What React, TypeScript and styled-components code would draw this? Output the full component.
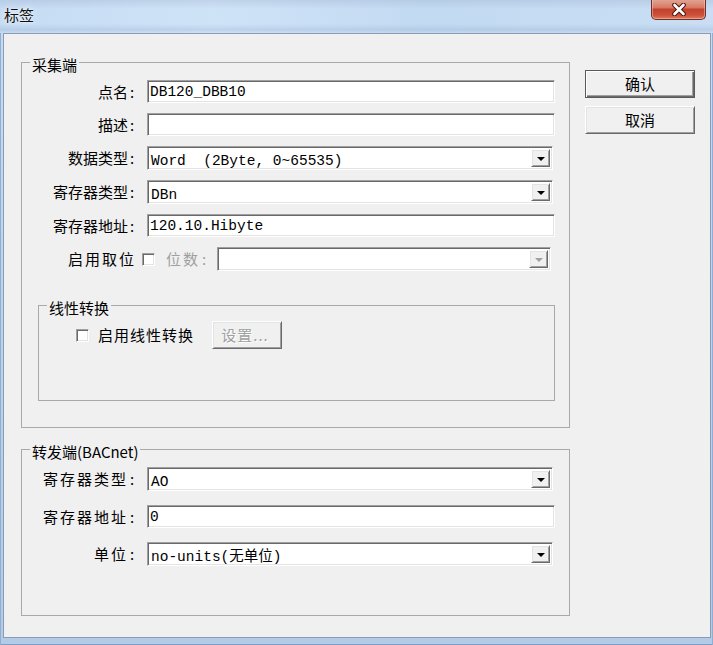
import React from "react";
import styled, { createGlobalStyle, css } from "styled-components";

const GlobalStyle = createGlobalStyle`
  html, body { margin: 0; padding: 0; background: #ffffff; }
  body { font-family: "Noto Sans CJK SC", "Noto Sans", sans-serif; color: #000; }
  * { box-sizing: border-box; }
`;

const Window = styled.div`
  width: 713px;
  height: 645px;
  display: flex;
  flex-direction: column;
  background: linear-gradient(to bottom, #c6dcf3 0%, #bdd5ee 40%, #b3cbe6 100%);
`;

const TitleBar = styled.div`
  height: 33px;
  flex: none;
  display: flex;
  justify-content: space-between;
  align-items: flex-start;
  padding: 0 5px 0 4px;
  background:
    linear-gradient(to bottom, rgba(150, 165, 195, 0.28) 0px, rgba(150, 165, 195, 0) 9px),
    linear-gradient(to bottom, rgba(255, 255, 255, 0) 24px, rgba(140, 160, 195, 0.25) 30px, rgba(255, 255, 255, 0) 33px),
    linear-gradient(to right, #c5dcf3 0%, #cfe3f7 30%, #c2daf2 60%, #c9def4 100%);
`;

const TitleText = styled.span`
  font-size: 15px;
  line-height: 18px;
  margin-top: 6px;
  color: #111;
  text-shadow: 0 0 6px rgba(255, 255, 255, 0.95), 0 0 2px rgba(255, 255, 255, 0.9);
`;

const CloseButton = styled.div`
  width: 55px;
  height: 21px;
  margin-top: -1px;
  margin-right: 2px;
  display: flex;
  align-items: center;
  justify-content: center;
  border: 1px solid #6d2f28;
  border-top: none;
  border-radius: 0 0 5px 5px;
  background: linear-gradient(to bottom, #e4a896 0%, #d77b66 42%, #c4412e 52%, #cc5038 80%, #df7a5c 100%);
  box-shadow: inset 0 0 0 1px rgba(255, 210, 200, 0.45);
`;

const FrameBody = styled.div`
  flex: 1;
  display: flex;
  padding: 0 3px 7px 3px;
  box-shadow: inset 1px 0 0 #8eaed3, inset -1px 0 0 #8eaed3, inset 0 -1px 0 #7d9ec6;
`;

const Client = styled.div`
  flex: 1;
  display: flex;
  gap: 15px;
  padding: 16px 15px 0 17px;
  background: #f0f0f0;
  border: 1px solid #8a9cb2;
`;

const LeftColumn = styled.div`
  width: 549px;
  display: flex;
  flex-direction: column;
  gap: 9px;
`;

const RightColumn = styled.div`
  width: 110px;
  display: flex;
  flex-direction: column;
  gap: 8px;
  margin-top: 20px;
`;

const Group = styled.fieldset<{ $pb: number }>`
  margin: 0;
  min-width: 0;
  padding: 6px 14px ${(p) => p.$pb}px 0;
  border: 1px solid #a9a9a9;
  display: flex;
  flex-direction: column;
`;

const InnerGroup = styled.fieldset`
  margin: 22px 0 0 16px;
  min-width: 0;
  height: 108px;
  padding: 4px 0 0 0;
  border: 1px solid #a9a9a9;
`;

const InnerContent = styled.div`
  display: flex;
  align-items: center;
  padding-left: 37px;
`;

const Legend = styled.legend`
  margin-left: 8px;
  padding: 6px 2px 0;
  font-size: 15px;
  line-height: 18px;
`;

const Rows = styled.div<{ $gap: number }>`
  display: flex;
  flex-direction: column;
  gap: ${(p) => p.$gap}px;
`;

const Row = styled.div`
  display: flex;
  align-items: center;
`;

const Label = styled.span<{ $spaced?: boolean; $disabled?: boolean }>`
  width: 114px;
  flex: none;
  text-align: right;
  white-space: nowrap;
  font-size: 15px;
  line-height: 18px;
  margin-right: 11px;
  letter-spacing: ${(p) => (p.$spaced ? "2px" : "0")};
  color: ${(p) => (p.$disabled ? "#a0a0a0" : "#000")};
`;

const Colon = styled.span`
  display: inline-block;
  width: 8px;
  text-align: center;
  letter-spacing: 0;
`;

const sunken = css`
  border: 1px solid;
  border-color: #a0a0a0 #ffffff #ffffff #a0a0a0;
  box-shadow: inset 1px 1px 0 #696969, inset -1px -1px 0 #e3e3e3;
  background: #ffffff;
`;

const raised = css`
  border: 1px solid;
  border-color: #ffffff #696969 #696969 #ffffff;
  box-shadow: inset 1px 1px 0 #e3e3e3, inset -1px -1px 0 #a0a0a0;
  background: #f0f0f0;
`;

const TextBox = styled.div`
  ${sunken};
  flex: 1;
  height: 23px;
  display: flex;
  align-items: center;
  padding-left: 2px;
  overflow: hidden;
`;

const Combo = styled.div<{ $ml?: number; $mr?: number }>`
  ${sunken};
  flex: 1;
  height: 24px;
  display: flex;
  align-items: center;
  padding: 2px;
  margin-left: ${(p) => p.$ml ?? 0}px;
  margin-right: ${(p) => p.$mr ?? 2}px;
`;

const ComboValue = styled.div`
  flex: 1;
  padding-left: 1px;
  overflow: hidden;
`;

const ArrowButton = styled.div`
  ${raised};
  width: 19px;
  height: 18px;
  flex: none;
  display: flex;
  align-items: center;
  justify-content: center;
`;

const Arrow = styled.span<{ $disabled?: boolean }>`
  width: 0;
  height: 0;
  border-left: 4px solid transparent;
  border-right: 4px solid transparent;
  border-top: 4px solid ${(p) => (p.$disabled ? "#a0a0a0" : "#000")};
  margin-top: 1px;
`;

const Mono = styled.span`
  font-family: "Liberation Mono", "Noto Sans CJK SC", monospace;
  font-size: 14.5px;
  line-height: 18px;
  white-space: pre;
`;

const CheckBox = styled.span<{ $ml: number }>`
  ${sunken};
  width: 13px;
  height: 13px;
  flex: none;
  margin-left: ${(p) => p.$ml}px;
`;

const CheckText = styled.span<{ $ml: number; $ls: number; $disabled?: boolean }>`
  margin-left: ${(p) => p.$ml}px;
  font-size: 15px;
  line-height: 18px;
  white-space: nowrap;
  letter-spacing: ${(p) => p.$ls}px;
  color: ${(p) => (p.$disabled ? "#a0a0a0" : "#000")};
`;

const PushButton = styled.div<{ $default?: boolean; $disabled?: boolean; $w: number; $ml?: number }>`
  ${raised};
  width: ${(p) => p.$w}px;
  height: 28px;
  margin-left: ${(p) => p.$ml ?? 0}px;
  display: flex;
  align-items: center;
  justify-content: center;
  font-size: 15px;
  line-height: 18px;
  color: ${(p) => (p.$disabled ? "#a0a0a0" : "#000")};
  text-shadow: ${(p) => (p.$disabled ? "1px 1px 0 #ffffff" : "none")};
  letter-spacing: ${(p) => (p.$disabled ? "1px" : "0")};
  ${(p) =>
    p.$default &&
    css`
      border: 1px solid #5a5a5a;
      box-shadow: inset 1px 1px 0 #ffffff, inset -1px -1px 0 #696969, inset -2px -2px 0 #a0a0a0;
    `}
`;

const ButtonSpacer = styled.span`
  display: inline-block;
  width: 4px;
`;

const CloseGlyph = () => (
  <svg width="16" height="13" viewBox="0 0 16 13">
    <path d="M3.5 2 L12.5 11 M12.5 2 L3.5 11" stroke="#4a1810" strokeWidth="4.6" strokeLinecap="round" fill="none" />
    <path d="M3.5 2 L12.5 11 M12.5 2 L3.5 11" stroke="#ffffff" strokeWidth="2.6" strokeLinecap="round" fill="none" />
  </svg>
);

type FieldProps = { label: string; spaced?: boolean };

const FieldLabel = ({ label, spaced }: FieldProps) => (
  <Label $spaced={spaced}>
    {label}
    <Colon>:</Colon>
  </Label>
);

const TextField = ({ label, value, spaced }: FieldProps & { value: string }) => (
  <Row>
    <FieldLabel label={label} spaced={spaced} />
    <TextBox>
      <Mono>{value}</Mono>
    </TextBox>
  </Row>
);

const ComboField = ({ label, value, spaced }: FieldProps & { value: string }) => (
  <Row>
    <FieldLabel label={label} spaced={spaced} />
    <Combo>
      <ComboValue>
        <Mono>{value}</Mono>
      </ComboValue>
      <ArrowButton>
        <Arrow />
      </ArrowButton>
    </Combo>
  </Row>
);

export default function App() {
  return (
    <>
      <GlobalStyle />
      <Window>
        <TitleBar>
          <TitleText>标签</TitleText>
          <CloseButton>
            <CloseGlyph />
          </CloseButton>
        </TitleBar>
        <FrameBody>
          <Client>
            <LeftColumn>
              <Group $pb={26}>
                <Legend>采集端</Legend>
                <Rows $gap={10}>
                  <TextField label="点名" value="DB120_DBB10" />
                  <TextField label="描述" value="" />
                  <ComboField label="数据类型" value="Word  (2Byte, 0~65535)" />
                  <ComboField label="寄存器类型" value="DBn" />
                  <TextField label="寄存器地址" value="120.10.Hibyte" />
                  <Row>
                    <Label $spaced>启用取位</Label>
                    <CheckBox $ml={-5} />
                    <CheckText $ml={11} $ls={2} $disabled>
                      位数<Colon>:</Colon>
                    </CheckText>
                    <Combo $ml={9} $mr={4}>
                      <ComboValue />
                      <ArrowButton>
                        <Arrow $disabled />
                      </ArrowButton>
                    </Combo>
                  </Row>
                </Rows>
                <InnerGroup>
                  <Legend>线性转换</Legend>
                  <InnerContent>
                    <CheckBox $ml={0} />
                    <CheckText $ml={9} $ls={1}>
                      启用线性转换
                    </CheckText>
                    <PushButton $w={70} $ml={18} $disabled>
                      设置...
                      <ButtonSpacer />
                    </PushButton>
                  </InnerContent>
                </InnerGroup>
              </Group>
              <Group $pb={49}>
                <Legend>转发端(BACnet)</Legend>
                <Rows $gap={14}>
                  <ComboField label="寄存器类型" value="AO" spaced />
                  <TextField label="寄存器地址" value="0" spaced />
                  <ComboField label="单位" value="no-units(无单位)" spaced />
                </Rows>
              </Group>
            </LeftColumn>
            <RightColumn>
              <PushButton $w={110} $default>
                确认
              </PushButton>
              <PushButton $w={110}>取消</PushButton>
            </RightColumn>
          </Client>
        </FrameBody>
      </Window>
    </>
  );
}
